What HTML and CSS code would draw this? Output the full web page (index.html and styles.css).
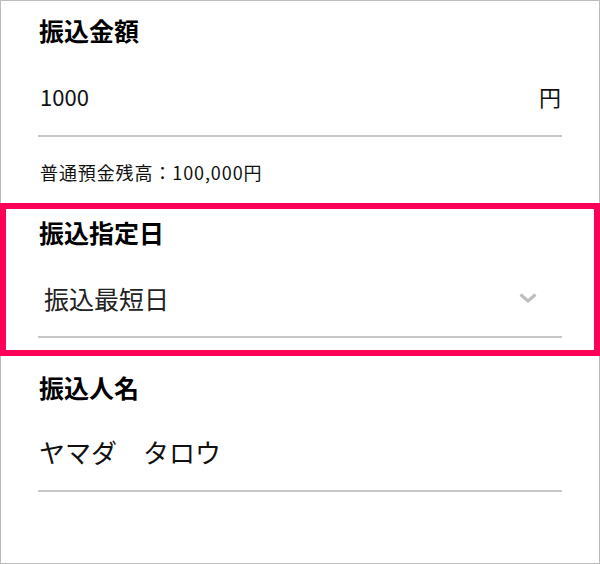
FILE: index.html
```html
<!DOCTYPE html>
<html lang="ja">
<head>
  <meta charset="UTF-8" />
  <meta name="viewport" content="width=device-width, initial-scale=1" />
  <title>振込</title>
  <link rel="stylesheet" href="styles.css">
</head>
<body>

<div class="card">

  <!-- 振込金額 -->
  <div class="field amount">
    <label class="field-label" for="amount">振込金額</label>
    <div class="field-row">
      <input id="amount" class="field-input" type="text" value="1000" />
      <span class="unit">円</span>
    </div>
    <p class="balance">普通預金残高：100,000円</p>
  </div>

  <!-- 振込指定日 (highlighted) -->
  <div class="field date highlight">
    <label class="field-label" for="date">振込指定日</label>
    <div class="field-row">
      <select id="date" class="field-select">
        <option>振込最短日</option>
      </select>
      <svg class="chevron" width="18" height="10" viewBox="0 0 18 10">
        <polyline points="1.5,1.5 9,8 16.5,1.5" fill="none" stroke="#bdbdbd" stroke-width="3" />
      </svg>
    </div>
  </div>

  <!-- 振込人名 -->
  <div class="field name">
    <label class="field-label" for="name">振込人名</label>
    <div class="field-row">
      <input id="name" class="field-input" type="text" value="ヤマダ　タロウ" />
    </div>
  </div>

</div>

</body>
</html>
```

FILE: styles.css
```css
html, body {
  margin: 0;
  padding: 0;
}

body {
  font-family: "Noto Sans CJK JP", "Noto Sans", sans-serif;
  color: #111;
  background: #fff;
}

.card {
  box-sizing: border-box;
  width: 600px;
  height: 564px;
  border: 1px solid #bcbcbc;
  display: flex;
  flex-direction: column;
}

.field {
  padding: 0 37px;
}

.field-label {
  display: block;
  font-size: 25px;
  font-weight: bold;
  line-height: 32px;
  color: #000;
  padding-left: 1px;
}

.field-row {
  display: flex;
  align-items: center;
  border-bottom: 2px solid #c8c8c8;
}

.field-input,
.field-select {
  flex: 1;
  border: none;
  outline: none;
  background: transparent;
  font-family: inherit;
  color: #111;
  height: 40px;
  line-height: 40px;
  padding: 0;
  margin: 0;
}

.field-select {
  -webkit-appearance: none;
  appearance: none;
  font-size: 25px;
  padding-left: 6px;
  color: #222;
}

/* amount */
.amount {
  padding-top: 13px;
}
.amount .field-row {
  margin-top: 30px;
  padding-bottom: 19px;
}
.amount .field-input {
  font-size: 22px;
  padding-left: 2px;
}
.unit {
  font-size: 22px;
  line-height: 40px;
  margin-right: 1px;
}
.balance {
  margin: 22px 0 0;
  font-size: 18px;
  letter-spacing: 0.9px;
  line-height: 27px;
  padding-left: 2px;
}

/* date */
.highlight {
  margin: 17px -1px 0;
  border: 6px solid #fe0058;
  padding: 7px 32px 12px 32px;
}
.date .field-row {
  margin-top: 30px;
  padding-bottom: 18px;
}
.chevron {
  margin-right: 25px;
}

/* name */
.name {
  margin-top: 15px;
}
.name .field-row {
  margin-top: 29px;
  padding-bottom: 18px;
}
.name .field-input {
  font-size: 26px;
  padding-left: 1px;
}
```
